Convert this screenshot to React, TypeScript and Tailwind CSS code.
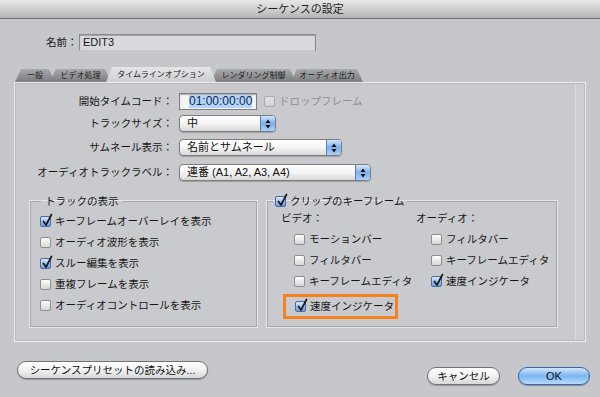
import React from 'react';

const FONT = "font-['Liberation_Sans','Noto_Sans_CJK_JP',sans-serif]";

function Check({ checked = false, disabled = false }: { checked?: boolean; disabled?: boolean }) {
  return (
    <span
      className={
        'relative inline-flex w-[11px] h-[11px] shrink-0 rounded-[2px] border ' +
        (checked
          ? 'border-[#4a6b9c] bg-gradient-to-b from-[#dbe9fa] via-[#9fc2ee] to-[#6b9ddc]'
          : 'border-[#8e8e8e] bg-gradient-to-b from-white to-[#d6d6d6]') +
        (disabled ? ' opacity-50' : '')
      }
    >
      {checked && (
        <svg className="absolute -top-[4px] left-[1px]" width="11" height="14" viewBox="0 0 11 14">
          <path d="M1.5 8.5 L4 12 L9.5 1.5" stroke="#1a1a1a" strokeWidth="1.7" fill="none" strokeLinecap="round" strokeLinejoin="round" />
        </svg>
      )}
    </span>
  );
}

function Popup({ className, text }: { className: string; text: string }) {
  return (
    <div className={'flex items-center h-[17px] rounded-[4px] border border-[#7d7d7d] bg-gradient-to-b from-white via-[#f5f5f5] to-[#d8d8d8] overflow-hidden shadow-[0_1px_1px_rgba(0,0,0,0.2)] ' + className}>
      <span className="flex-1 pl-[7px] text-[11px] leading-none text-[#111]">{text}</span>
      <span className="flex h-full w-[15px] items-center justify-center border-l border-[#5a7fb5] bg-gradient-to-b from-[#d4e6fb] via-[#7fb0ec] to-[#a9d0f8]">
        <svg width="6" height="10" viewBox="0 0 6 10">
          <path d="M3 0.5 L5.5 4 L0.5 4 Z" fill="#111" />
          <path d="M3 9.5 L5.5 6 L0.5 6 Z" fill="#111" />
        </svg>
      </span>
    </div>
  );
}

function Item({ checked, label, className = '' }: { checked?: boolean; label: string; className?: string }) {
  return (
    <div className={'flex items-center gap-[4px] h-[13px] ' + className}>
      <Check checked={checked} />
      <span className="text-[10.5px] leading-none text-[#161616]">{label}</span>
    </div>
  );
}

const TABS = [
  { label: '一般', w: 'w-[40px]', active: false },
  { label: 'ビデオ処理', w: 'w-[61px]', active: false },
  { label: 'タイムラインオプション', w: 'w-[110px]', active: true },
  { label: 'レンダリング制御', w: 'w-[85px]', active: false },
  { label: 'オーディオ出力', w: 'w-[72px]', active: false },
];

export default function App() {
  return (
    <div className={'w-[600px] h-[397px] bg-[#c6c7cb] flex flex-col overflow-hidden text-[#161616] ' + FONT}>
      {/* title bar */}
      <div className="h-[19px] shrink-0 flex items-center justify-center bg-gradient-to-b from-[#e8e8e8] via-[#d0d0d0] to-[#b4b4b4] border-b border-[#6f6f6f]">
        <span className="text-[11px] leading-none text-[#1e1e1e]">シーケンスの設定</span>
      </div>

      {/* name */}
      <div className="flex items-center mt-[15px] pl-[46px] h-[17px]">
        <span className="text-[10.5px] leading-none w-[33px]">名前：</span>
        <div className="w-[237px] h-[17px] flex items-center pl-[3px] bg-[#d9dadd] border border-[#8a8a8a] border-b-[#c4c4c4] shadow-[inset_0_1px_1px_rgba(0,0,0,0.25)]">
          <span className="text-[11px] leading-none">EDIT3</span>
        </div>
      </div>

      {/* tabs */}
      <div className="flex items-end mt-[15px] pl-[15px] h-[16px]">
        {TABS.map((t) => (
          <div
            key={t.label}
            className={
              'relative -mr-[5px] flex items-center justify-center [clip-path:polygon(6px_0,calc(100%-6px)_0,100%_100%,0_100%)] ' +
              (t.active
                ? 'z-10 h-[15px] bg-gradient-to-b from-[#e6e6e8] to-[#cdced1] '
                : 'h-[13px] bg-gradient-to-b from-[#a9aaad] via-[#929396] to-[#7d7e81] ') +
              t.w
            }
          >
            <span className="text-[8px] leading-none whitespace-nowrap text-[#1a1a1a]">{t.label}</span>
          </div>
        ))}
      </div>

      {/* panel */}
      <div className="mx-[14px] w-[572px] h-[260px] border border-[#eeeeef] bg-[#c9cacd] shadow-[inset_0_0_0_1px_#b9babd] flex">
        <div className="flex-1 flex flex-col">
          {/* fields */}
          <div className="grid grid-cols-[158px_1fr] gap-x-[6px] items-center mt-[10px]">
            <span className="text-[10.5px] leading-none text-right">開始タイムコード：</span>
            <div className="flex items-center h-[17px]">
              <div className="w-[78px] h-[17px] flex items-center pl-[9px] bg-[#f4f4f4] border border-[#7f7f7f] shadow-[inset_0_1px_1px_rgba(0,0,0,0.3)]">
                <span className="text-[12px] leading-[13px] bg-[#b4d3f8] text-[#102a55]">01:00:00:00</span>
              </div>
              <div className="flex items-center gap-[4px] ml-[7px]">
                <Check disabled />
                <span className="text-[10.5px] leading-none text-[#8e8f92]">ドロップフレーム</span>
              </div>
            </div>

            <span className="text-[10.5px] leading-none text-right mt-[5px]">トラックサイズ：</span>
            <div className="mt-[5px]">
              <Popup className="w-[97px]" text="中" />
            </div>

            <span className="text-[10.5px] leading-none text-right mt-[7px]">サムネール表示：</span>
            <div className="mt-[7px]">
              <Popup className="w-[163px]" text="名前とサムネール" />
            </div>

            <span className="text-[10.5px] leading-none text-right mt-[8px]">オーディオトラックラベル：</span>
            <div className="mt-[8px]">
              <Popup className="w-[192px]" text="連番 (A1, A2, A3, A4)" />
            </div>
          </div>

          {/* group boxes */}
          <div className="flex gap-[10px] ml-[15px] mt-[15px]">
            <fieldset className="w-[227px] h-[131px] border border-[#a7a8ab] shadow-[0_0_0_1px_#e6e7e9] pl-[9px] pr-[6px]">
              <legend className="px-[4px] ml-[1px] text-[10.5px] leading-none">トラックの表示</legend>
              <div className="flex flex-col gap-[8px] mt-[8px]">
                <Item checked label="キーフレームオーバーレイを表示" />
                <Item label="オーディオ波形を表示" />
                <Item checked label="スルー編集を表示" />
                <Item label="重複フレームを表示" />
                <Item label="オーディオコントロールを表示" />
              </div>
            </fieldset>

            <fieldset className="w-[290px] h-[131px] border border-[#a7a8ab] shadow-[0_0_0_1px_#e6e7e9] pl-[13px]">
              <legend className="flex items-center gap-[4px] px-[2px] -ml-[8px] text-[10.5px] leading-none">
                <Check checked />
                <span>クリップのキーフレーム</span>
              </legend>
              <div className="flex mt-[6px]">
                <div className="w-[135px] flex flex-col">
                  <span className="text-[10.5px] leading-none">ビデオ：</span>
                  <div className="flex flex-col gap-[8px] mt-[9px] pl-[13px]">
                    <Item label="モーションバー" />
                    <Item label="フィルタバー" />
                    <Item label="キーフレームエディタ" />
                    <div className="-ml-[11px] w-[115px] h-[25px] flex items-center pl-[9px] border-[3px] border-[#f5821f] -mt-[2px]">
                      <Item checked label="速度インジケータ" />
                    </div>
                  </div>
                </div>
                <div className="flex flex-col">
                  <span className="text-[10.5px] leading-none">オーディオ：</span>
                  <div className="flex flex-col gap-[8px] mt-[9px] pl-[15px]">
                    <Item label="フィルタバー" />
                    <Item label="キーフレームエディタ" />
                    <Item checked label="速度インジケータ" />
                  </div>
                </div>
              </div>
            </fieldset>
          </div>
        </div>
        <div className="w-[9px] my-[1px] mr-[1px] border-l border-[#d9dadc] bg-[#cdced1]" />
      </div>

      {/* bottom buttons */}
      <div className="flex items-start mt-[19px] pl-[17px] pr-[10px]">
        <button className="h-[18px] w-[191px] rounded-full border border-[#727272] bg-gradient-to-b from-white via-[#f2f2f2] to-[#d7d7d7] shadow-[0_1px_1px_rgba(0,0,0,0.25)] text-[10.5px] leading-none text-[#111]">
          シーケンスプリセットの読み込み...
        </button>
        <div className="flex-1" />
        <button className="mt-[6px] h-[18px] w-[73px] rounded-full border border-[#727272] bg-gradient-to-b from-white via-[#f2f2f2] to-[#d7d7d7] shadow-[0_1px_1px_rgba(0,0,0,0.25)] text-[10.5px] leading-none text-[#111]">
          キャンセル
        </button>
        <button className="mt-[6px] ml-[18px] h-[18px] w-[72px] rounded-full border border-[#3a67aa] bg-gradient-to-b from-[#d0e6fb] via-[#7ab5f0] to-[#b6dcfc] shadow-[0_1px_1px_rgba(0,0,0,0.3)] text-[11px] leading-none text-[#111]">
          OK
        </button>
      </div>
    </div>
  );
}
